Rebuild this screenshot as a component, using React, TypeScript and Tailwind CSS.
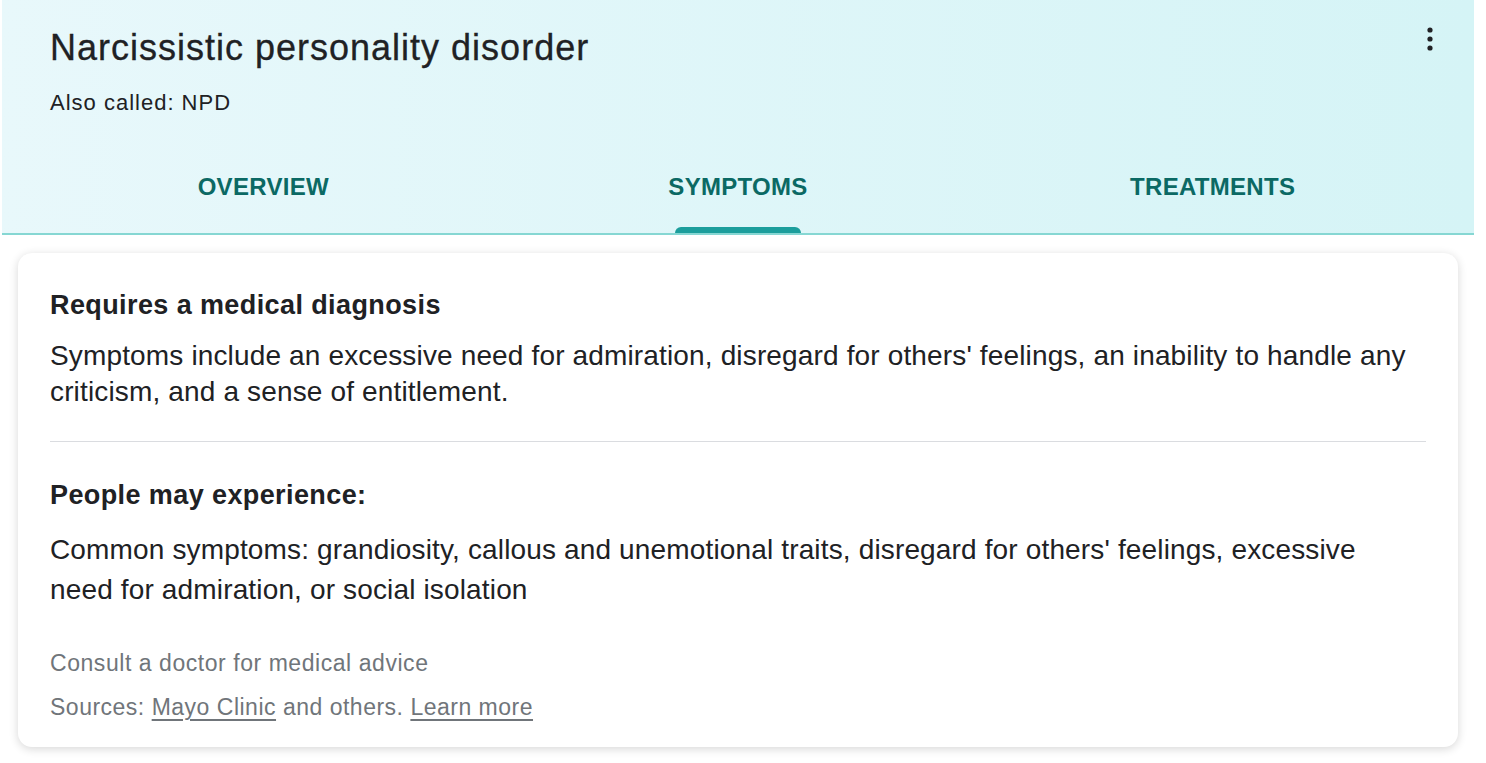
const TABS = ["OVERVIEW", "SYMPTOMS", "TREATMENTS"];

function MoreIcon() {
  return (
    <svg width="10" height="26" viewBox="0 0 10 26" aria-hidden>
      <circle cx="5" cy="4" r="2.6" fill="#202124" />
      <circle cx="5" cy="13" r="2.6" fill="#202124" />
      <circle cx="5" cy="22" r="2.6" fill="#202124" />
    </svg>
  );
}

export default function App() {
  return (
    <div
      className="w-[1486px] h-[763px] bg-white overflow-hidden text-[#202124]"
      style={{ fontFamily: '"Liberation Sans", Arial, sans-serif' }}
    >
      <div className="ml-[2px] w-[1472px] bg-gradient-to-r from-[#e8f8fb] to-[#d5f4f6]">
        <div className="relative px-[48px] pt-[28px]">
          <h1 className="text-[36px] leading-[40px] tracking-[1px] [-webkit-text-stroke:0.3px_#202124]">
            Narcissistic personality disorder
          </h1>
          <p className="mt-[21px] text-[22px] leading-[28px] tracking-[1px]">Also called: NPD</p>
          <button className="absolute right-[39px] top-[26px]">
            <MoreIcon />
          </button>
        </div>
        <div className="grid grid-cols-3 px-[24px] h-[116px]">
          {TABS.map((t) => (
            <div key={t} className="flex flex-col items-center justify-between pt-[56px]">
              <span className="text-[24px] leading-[28px] font-bold tracking-[0.3px] text-[#0b6964]">{t}</span>
              {t === "SYMPTOMS" ? (
                <span className="block h-[6px] w-[126px] rounded-t-[6px] bg-[#1c9e9c]" />
              ) : (
                <span className="block h-[6px]" />
              )}
            </div>
          ))}
        </div>
        <div className="h-[2px] bg-[#86d7d3]" />
      </div>

      <div className="ml-[18px] mt-[18px] w-[1440px] rounded-[14px] bg-white shadow-[0_2px_10px_rgba(0,0,0,0.16)] px-[32px] pt-[36px] pb-[26px]">
        <h2 className="text-[27px] leading-[32px] font-bold tracking-[0.4px]">Requires a medical diagnosis</h2>
        <p className="mt-[17px] text-[28px] leading-[36px] tracking-[0.15px]">
          Symptoms include an excessive need for admiration, disregard for others' feelings, an inability to handle any criticism, and a sense of entitlement.
        </p>
        <div className="mt-[31px] h-px bg-[#dadce0]" />
        <h2 className="mt-[37px] text-[27px] leading-[32px] font-bold tracking-[0.4px]">People may experience:</h2>
        <p className="mt-[19px] text-[28px] leading-[40px] tracking-[0.15px] max-w-[1340px]">
          Common symptoms: grandiosity, callous and unemotional traits, disregard for others' feelings, excessive need for admiration, or social isolation
        </p>
        <p className="mt-[39px] text-[23px] leading-[28px] tracking-[0.55px] text-[#70757a]">Consult a doctor for medical advice</p>
        <p className="mt-[16px] text-[23px] leading-[28px] tracking-[0.5px] text-[#70757a]">
          Sources: <a className="underline underline-offset-[4px]">Mayo Clinic</a> and others.{" "}
          <a className="underline underline-offset-[4px]">Learn more</a>
        </p>
      </div>
    </div>
  );
}
